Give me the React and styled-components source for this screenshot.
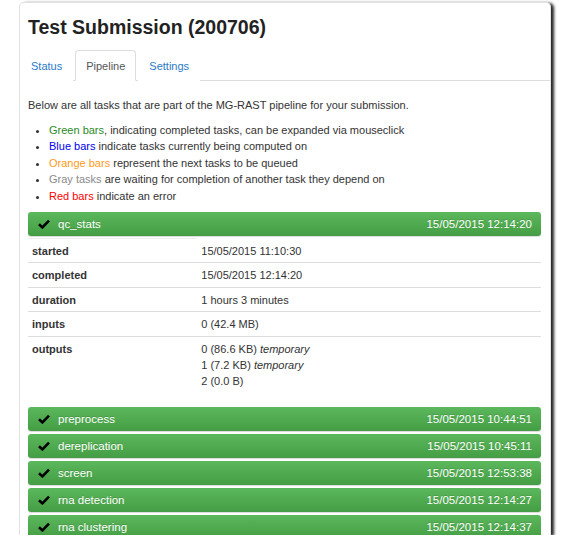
import React from 'react';
import styled, { createGlobalStyle } from 'styled-components';

const TASKS = [
	{ name: 'preprocess', date: '15/05/2015 10:44:51' },
	{ name: 'dereplication', date: '15/05/2015 10:45:11' },
	{ name: 'screen', date: '15/05/2015 12:53:38' },
	{ name: 'rna detection', date: '15/05/2015 12:14:27' },
	{ name: 'rna clustering', date: '15/05/2015 12:14:37' },
];

const DETAILS = [
	{ label: 'started', values: [['15/05/2015 11:10:30']] },
	{ label: 'completed', values: [['15/05/2015 12:14:20']] },
	{ label: 'duration', values: [['1 hours 3 minutes']] },
	{ label: 'inputs', values: [['0 (42.4 MB)']] },
	{
		label: 'outputs',
		values: [['0 (86.6 KB)', 'temporary'], ['1 (7.2 KB)', 'temporary'], ['2 (0.0 B)']],
	},
];

const Check = () => (
	<CheckIcon viewBox="0 0 12 10" width="12" height="10">
		<path d="M1 5.2 L4.4 8.4 L11 1.6" fill="none" stroke="#000" strokeWidth="2.6" />
	</CheckIcon>
);

const TaskBar = ({ name, date }) => (
	<Bar>
		<Check />
		<BarName>{name}</BarName>
		<BarDate>{date}</BarDate>
	</Bar>
);

const App = () => (
	<>
		<GlobalStyle />
		<Window>
			<Title>Test Submission (200706)</Title>
			<Tabs>
				<Tab>Status</Tab>
				<Tab active>Pipeline</Tab>
				<Tab>Settings</Tab>
			</Tabs>
			<Content>
				<Intro>Below are all tasks that are part of the MG-RAST pipeline for your submission.</Intro>
				<Legend>
					<li>
						<Hl color="#2a8a1f">Green bars</Hl>, indicating completed tasks, can be expanded via mouseclick
					</li>
					<li>
						<Hl color="#0000ee">Blue bars</Hl> indicate tasks currently being computed on
					</li>
					<li>
						<Hl color="#ff9a1a">Orange bars</Hl> represent the next tasks to be queued
					</li>
					<li>
						<Hl color="#8a8a8a">Gray tasks</Hl> are waiting for completion of another task they depend on
					</li>
					<li>
						<Hl color="#ff0000">Red bars</Hl> indicate an error
					</li>
				</Legend>
				<TaskBar name="qc_stats" date="15/05/2015 12:14:20" />
				<Details>
					<tbody>
						{DETAILS.map(row => (
							<tr key={row.label}>
								<Label>{row.label}</Label>
								<Value>
									{row.values.map(([text, note], i) => (
										<div key={i}>
											{text}
											{note ? <em> {note}</em> : null}
										</div>
									))}
								</Value>
							</tr>
						))}
					</tbody>
				</Details>
				<BarList>
					{TASKS.map(task => (
						<TaskBar key={task.name} {...task} />
					))}
				</BarList>
			</Content>
		</Window>
	</>
);

const GlobalStyle = createGlobalStyle`
	body {
		margin: 0;
		background: #fff;
		font-family: 'Liberation Sans', Arial, sans-serif;
		color: #333;
	}
`;

const Window = styled.div`
	margin: 2px 0 0 19px;
	width: 530px;
	height: 532px;
	overflow: hidden;
	background: #fff;
	border: 1px solid #e2e2e2;
	border-bottom: none;
	border-radius: 5px 5px 0 0;
	box-shadow: 3px 1px 3px rgba(0, 0, 0, 0.85);
`;

const Title = styled.h1`
	margin: 12px 0 0 8px;
	font-size: 19.5px;
	line-height: 24px;
	font-weight: bold;
	color: #222;
`;

const Tabs = styled.div`
	display: flex;
	margin-top: 11px;
	border-bottom: 1px solid #ddd;
`;

const Tab = styled.div`
	display: flex;
	align-items: center;
	height: 29px;
	padding: 0 10px;
	margin-right: 2px;
	margin-bottom: -1px;
	font-size: 11px;
	color: ${props => (props.active ? '#555' : '#2a7ac8')};
	background: #fff;
	border: 1px solid ${props => (props.active ? '#ddd' : 'transparent')};
	border-bottom-color: ${props => (props.active ? '#fff' : 'transparent')};
	border-radius: 4px 4px 0 0;
`;

const Content = styled.div`
	padding: 16px 9px 0 8px;
	font-size: 11px;
`;

const Intro = styled.p`
	margin: 0 0 9px;
	line-height: 16px;
`;

const Legend = styled.ul`
	margin: 0 0 8px;
	padding-left: 21px;
	line-height: 16.4px;
`;

const Hl = styled.span`
	color: ${props => props.color};
`;

const Bar = styled.div`
	display: flex;
	align-items: center;
	height: 24px;
	padding: 0 10px;
	border-radius: 3px;
	background-image: linear-gradient(to bottom, #5cb85c 0%, #449d44 100%);
	box-shadow: 0 1px 1px rgba(0, 0, 0, 0.15);
	color: #fff;
	font-size: 11.5px;
	text-shadow: 0 -1px 0 rgba(0, 0, 0, 0.15);
`;

const CheckIcon = styled.svg`
	flex: none;
	margin-right: 8px;
`;

const BarName = styled.span`
	flex: 1;
`;

const BarDate = styled.span`
	margin-right: -1px;
`;

const Details = styled.table`
	width: 100%;
	margin-top: 2px;
	border-collapse: collapse;
	font-size: 11px;
	line-height: 16.4px;

	tr:nth-child(-n + 4) td {
		border-bottom: 1px solid #ddd;
	}
`;

const Label = styled.td`
	width: 33%;
	padding: 4px 4px 3px;
	vertical-align: top;
	font-weight: bold;
	border-top: 1px solid #eee;
`;

const Value = styled.td`
	padding: 4px 4px 3px;
	vertical-align: top;
`;

const BarList = styled.div`
	display: flex;
	flex-direction: column;
	gap: 3px;
	margin-top: 14px;
`;

export default App;
